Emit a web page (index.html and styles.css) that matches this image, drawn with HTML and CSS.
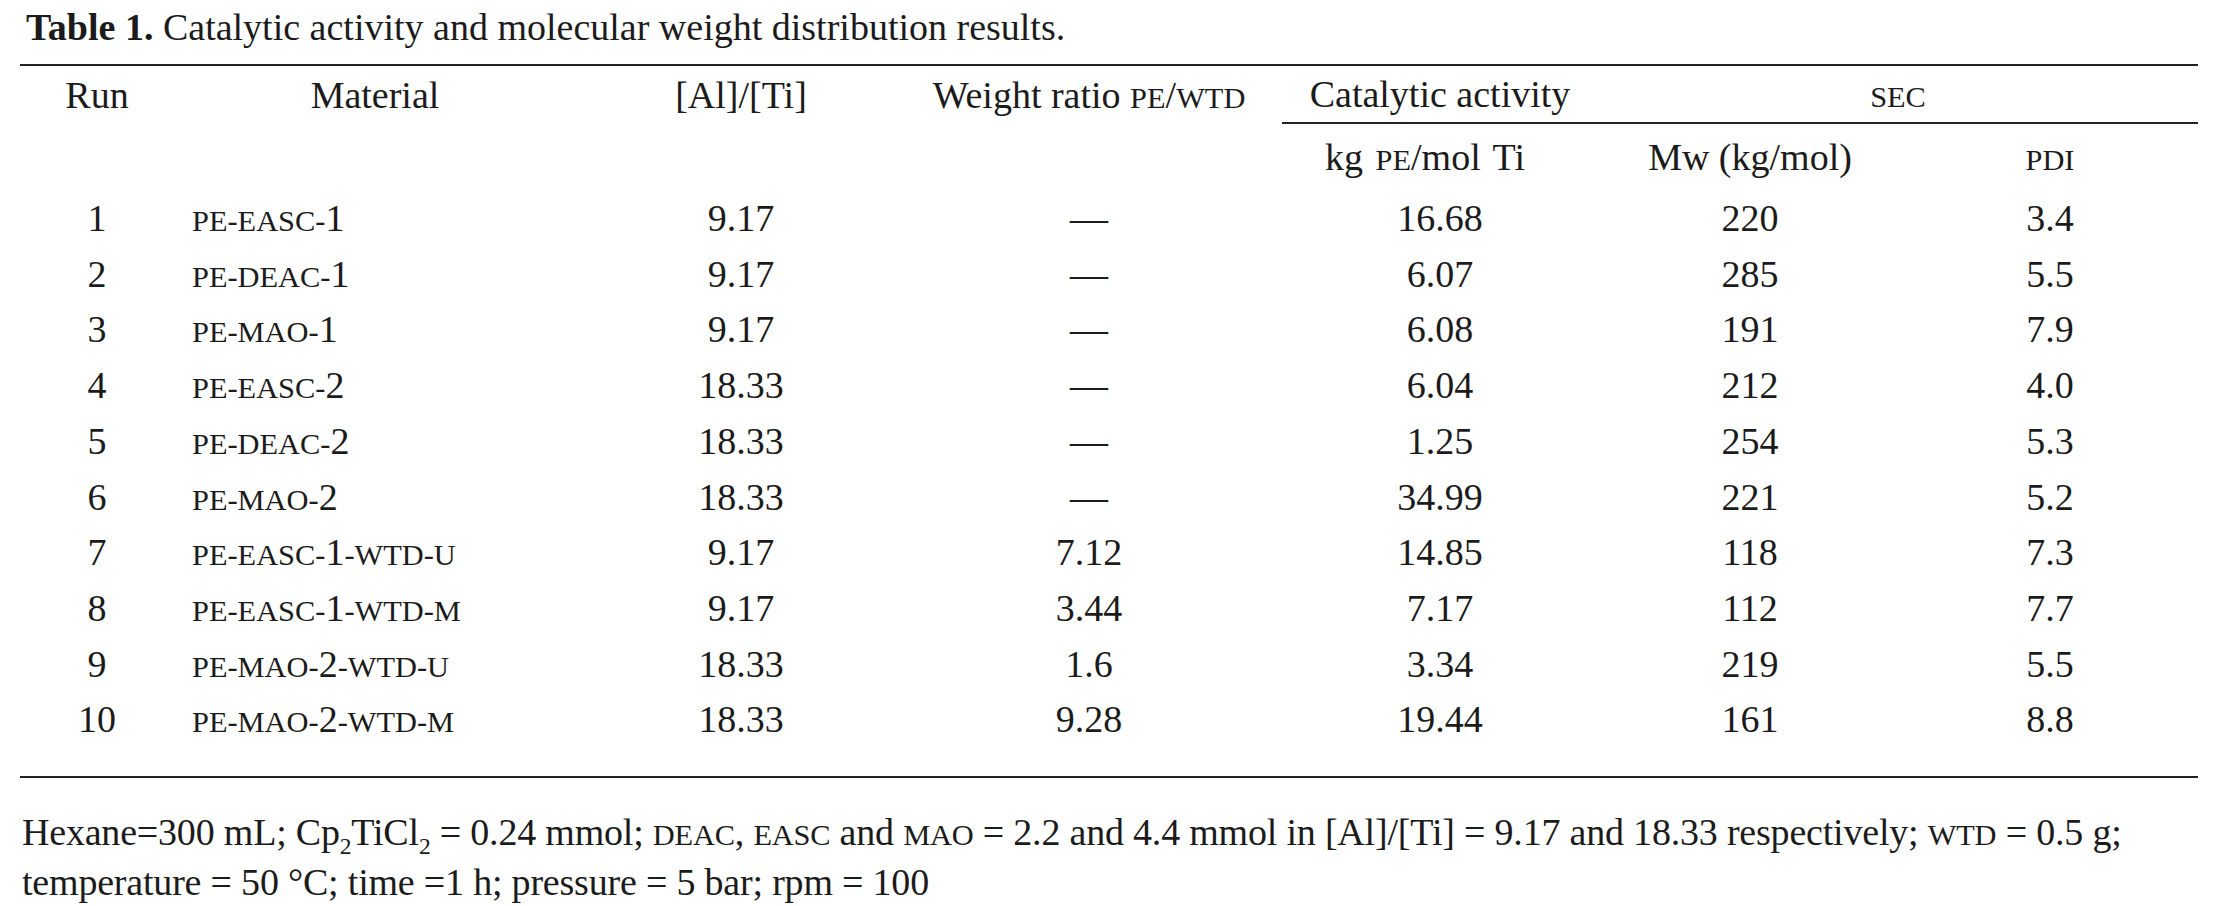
FILE: index.html
```html
<!DOCTYPE html>
<html>
<head>
<meta charset="utf-8">
<link rel="stylesheet" href="styles.css">
</head>
<body>
<div class="page">
  <p class="title"><b>Table 1.</b> Catalytic activity and molecular weight distribution results.</p>
  <table class="data">
    <colgroup>
      <col class="c-run"><col class="c-mat"><col class="c-al"><col class="c-wr"><col class="c-cat"><col class="c-mw"><col class="c-pdi">
    </colgroup>
    <thead>
      <tr class="h1">
        <th>Run</th>
        <th class="mat-h">Material</th>
        <th>[Al]/[Ti]</th>
        <th>Weight ratio <span class="sc">PE</span>/<span class="sc">WTD</span></th>
        <th class="ruled">Catalytic activity</th>
        <th class="ruled" colspan="2"><span class="sc">SEC</span></th>
      </tr>
      <tr class="h2">
        <th></th><th></th><th></th><th></th>
        <th class="kg">kg <span class="sc">PE</span>/mol Ti</th>
        <th>Mw (kg/mol)</th>
        <th><span class="sc">PDI</span></th>
      </tr>
    </thead>
    <tbody>
      <tr><td>1</td><td class="mat"><span class="sc">PE-EASC-</span>1</td><td>9.17</td><td>—</td><td>16.68</td><td>220</td><td>3.4</td></tr>
      <tr><td>2</td><td class="mat"><span class="sc">PE-DEAC-</span>1</td><td>9.17</td><td>—</td><td>6.07</td><td>285</td><td>5.5</td></tr>
      <tr><td>3</td><td class="mat"><span class="sc">PE-MAO-</span>1</td><td>9.17</td><td>—</td><td>6.08</td><td>191</td><td>7.9</td></tr>
      <tr><td>4</td><td class="mat"><span class="sc">PE-EASC-</span>2</td><td>18.33</td><td>—</td><td>6.04</td><td>212</td><td>4.0</td></tr>
      <tr><td>5</td><td class="mat"><span class="sc">PE-DEAC-</span>2</td><td>18.33</td><td>—</td><td>1.25</td><td>254</td><td>5.3</td></tr>
      <tr><td>6</td><td class="mat"><span class="sc">PE-MAO-</span>2</td><td>18.33</td><td>—</td><td>34.99</td><td>221</td><td>5.2</td></tr>
      <tr><td>7</td><td class="mat"><span class="sc">PE-EASC-</span>1<span class="sc">-WTD-U</span></td><td>9.17</td><td>7.12</td><td>14.85</td><td>118</td><td>7.3</td></tr>
      <tr><td>8</td><td class="mat"><span class="sc">PE-EASC-</span>1<span class="sc">-WTD-M</span></td><td>9.17</td><td>3.44</td><td>7.17</td><td>112</td><td>7.7</td></tr>
      <tr><td>9</td><td class="mat"><span class="sc">PE-MAO-</span>2<span class="sc">-WTD-U</span></td><td>18.33</td><td>1.6</td><td>3.34</td><td>219</td><td>5.5</td></tr>
      <tr class="last"><td>10</td><td class="mat"><span class="sc">PE-MAO-</span>2<span class="sc">-WTD-M</span></td><td>18.33</td><td>9.28</td><td>19.44</td><td>161</td><td>8.8</td></tr>
    </tbody>
  </table>
  <p class="note">Hexane=300 mL; Cp<sub>2</sub>TiCl<sub>2</sub> = 0.24 mmol; <span class="sc">DEAC</span>, <span class="sc">EASC</span> and <span class="sc">MAO</span> = 2.2 and 4.4 mmol in [Al]/[Ti] = 9.17 and 18.33 respectively; <span class="sc">WTD</span> = 0.5 g;<br>temperature = 50 °C; time =1 h; pressure = 5 bar; rpm = 100</p>
</div>
</body>
</html>
```

FILE: styles.css
```css
html, body {
  margin: 0;
  padding: 0;
  background: #ffffff;
}

body {
  color: #1b1b1b;
  font-family: "Liberation Serif", "Times New Roman", serif;
  font-size: 38px;
}

.page {
  padding: 5px 18px 0 20px;
}

.title {
  margin: 0 0 15px 6px;
  line-height: 44px;
  white-space: nowrap;
}

.title b {
  font-weight: bold;
}

.sc {
  font-size: 0.8em;
  line-height: 1;
}

.data {
  width: 2178px;
  table-layout: fixed;
  border-collapse: separate;
  border-spacing: 0;
  border-top: 2px solid #222;
  border-bottom: 2px solid #222;
}

.c-run { width: 154px; }
.c-mat { width: 412px; }
.c-al  { width: 310px; }
.c-wr  { width: 386px; }
.c-cat { width: 316px; }
.c-mw  { width: 304px; }
.c-pdi { width: 296px; }

.data th,
.data td {
  padding: 0;
  font-weight: normal;
  text-align: center;
  white-space: nowrap;
}

.h1 th {
  height: 56px;
  line-height: 56px;
  vertical-align: middle;
}

.h1 th.ruled {
  border-bottom: 2px solid #222;
}

.h1 th.mat-h {
  padding-right: 10px;
}

.h2 th {
  height: 67px;
  line-height: 67px;
  vertical-align: middle;
}

.h2 th.kg {
  padding-right: 30px;
  word-spacing: 3px;
}

.data td {
  line-height: 55.7px;
  vertical-align: top;
}

.data td.mat {
  text-align: left;
  padding-left: 18px;
}

.data tr.last td {
  padding-bottom: 28px;
}

.note {
  margin: 29px 0 0 2px;
  line-height: 50px;
  white-space: nowrap;
  letter-spacing: -0.2px;
}

.note sub {
  font-size: 0.62em;
  line-height: 0;
}
```
